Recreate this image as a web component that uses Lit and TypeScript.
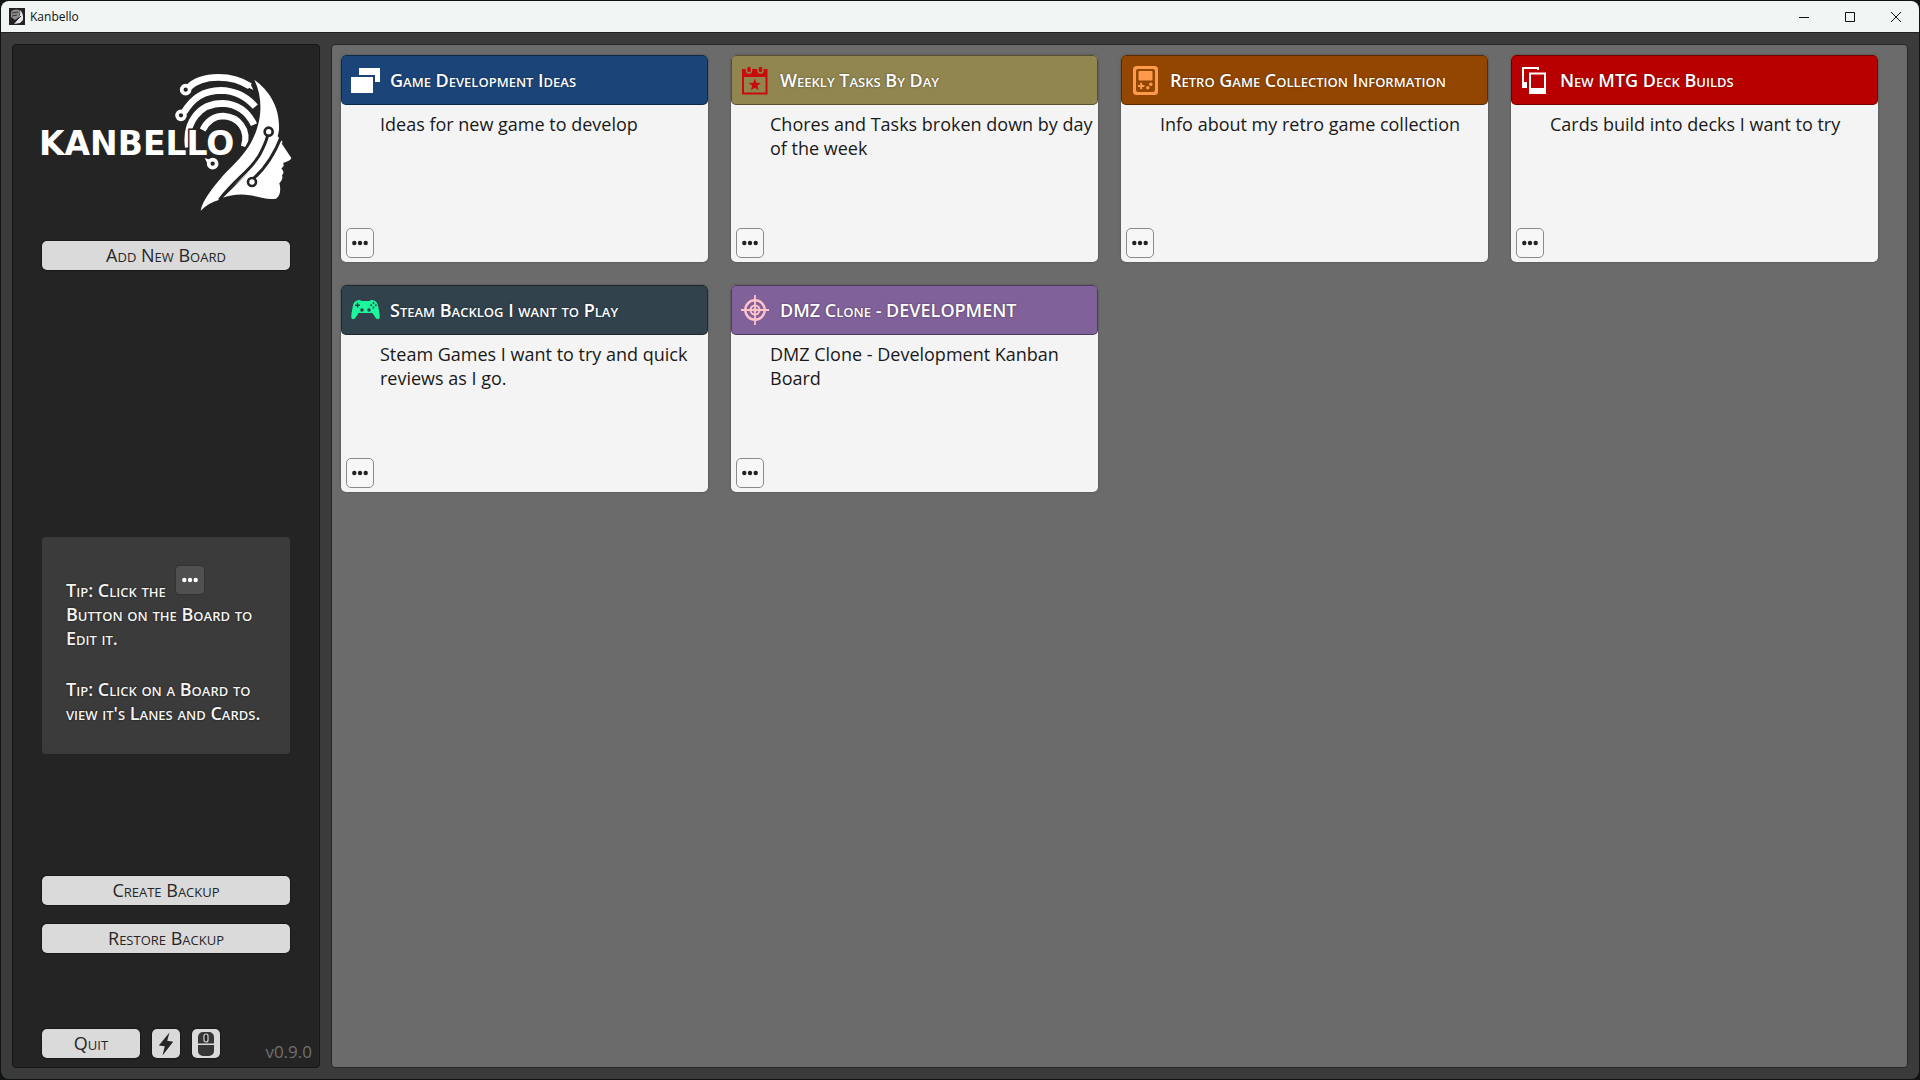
import { LitElement, html, css, svg, TemplateResult } from "lit";
import { customElement, property } from "lit/decorators.js";

interface Board {
  title: string;
  text: string;
  tone: string;
  icon: TemplateResult;
}

const windowsIcon = svg`
  <rect x="8" y="3" width="21" height="14" fill="#fff"/>
  <rect x="-1" y="10" width="25" height="19" fill="#1b4478"/>
  <rect x="0" y="12" width="22" height="16" fill="#fff"/>`;

const calendarIcon = svg`
  <path d="M1 4h25.500v25.500h-25.500z" fill="#c90b0b"/>
  <path d="M3 12h21.500v15.500h-21.500z" fill="#918550"/>
  <rect x="5.500" y="1" width="5" height="7" rx="2.500" fill="#c90b0b" stroke="#918550" stroke-width="1.500"/>
  <rect x="17" y="1" width="5" height="7" rx="2.500" fill="#c90b0b" stroke="#918550" stroke-width="1.500"/>
  <path d="M13.800 13.500l1.600 4.300 4.600.2-3.600 2.800 1.300 4.500-3.900-2.600-3.900 2.600 1.300-4.500-3.600-2.800 4.600-.2z" fill="#c90b0b"/>`;

const handheldIcon = svg`
  <rect x="2" y="1" width="25" height="29" rx="3.500" fill="#ff9a4d"/>
  <rect x="5" y="4" width="19" height="23" rx="2" fill="#924600"/>
  <rect x="7.500" y="6" width="14" height="9.500" rx="1" fill="#ff9a4d"/>
  <path d="M9.200 17.800h2v2.200h2.200v2h-2.200v2.200h-2v-2.200h-2.200v-2h2.200z" fill="#ff9a4d"/>
  <circle cx="19.800" cy="19.300" r="1.700" fill="#ff9a4d"/>
  <circle cx="16.800" cy="22.800" r="1.700" fill="#ff9a4d"/>`;

const cardsIcon = svg`
  <path d="M1 2h17v3h-2v-1h-13v13h3v6h-5z" fill="#fff"/>
  <path d="M8 7.500h17v21.500h-17z M10 9.500v13.500h13v-13.500z" fill="#fff" fill-rule="evenodd"/>`;

const gamepadIcon = svg`
  <path d="M6.500 5.500C8 4.800 9.500 5 10.500 6h8C19.500 5 21 4.800 22.500 5.500 25.500 6 26.500 8 27.300 12c.9 4.500 1.500 8 1.400 10 0 2.600-3 2.900-4.200.8L21.500 18h-14l-3 4.800C3.300 24.900.3 24.600.3 22c-.1-2 .5-5.500 1.400-10C2.500 8 3.500 6 6.500 5.500z" fill="#1cf79c"/>
  <path d="M5.800 7.800h1.400v1.700h1.700v1.400H7.200v1.700H5.800v-1.700H4.100V9.500h1.700z" fill="#31424d"/>
  <circle cx="22.500" cy="7.900" r="1" fill="#31424d"/><circle cx="24.800" cy="10.200" r="1" fill="#31424d"/>
  <circle cx="22.500" cy="12.500" r="1" fill="#31424d"/><circle cx="20.200" cy="10.200" r="1" fill="#31424d"/>
  <circle cx="11" cy="15" r="1.800" fill="#31424d"/><circle cx="18" cy="15" r="1.800" fill="#31424d"/>`;

const crosshairIcon = svg`
  <g fill="none" stroke="#ffc3cb" stroke-width="2">
    <circle cx="14" cy="15" r="9.700" stroke-width="2.400"/>
    <circle cx="14" cy="15" r="4.500"/>
    <path d="M14 0v30M0 15h28" stroke-width="1.800"/>
  </g>
  <circle cx="14" cy="15" r="2" fill="#ffc3cb"/>`;

const dots = html`<svg class="dots" viewBox="0 0 16 6" width="16" height="6" aria-hidden="true">
  <circle cx="2.300" cy="3" r="2.200"/><circle cx="8" cy="3" r="2.200"/><circle cx="13.700" cy="3" r="2.200"/>
</svg>`;

const headMark = svg`
  <g fill="none" stroke="#fff" stroke-width="20">
    <path d="M54 60C75 38 105 28 145 28C185 28 215 38 240 55"/>
    <path d="M42 133C68 90 100 68 152 67C195 68 230 86 256 116"/>
    <path d="M55 238C44 160 90 106 158 106C200 108 232 128 252 170"/>
    <path d="M98 186C112 158 134 144 160 144C205 146 238 185 222 236" stroke-width="19"/>
  </g>
  <path d="M232 20L266 74L262 100L274 140L250 192L214 258L256 250L290 130L262 20z" fill="#242424"/>
  <g fill="#fff">
    <path d="M226 38L240 44L250 66L234 58z"/>
    <path d="M104 270L140 282L116 294z"/>
  </g>
  <g fill="#fff">
    <path d="M253 35C300 70 330 118 327 186C324 222 290 262 262 290C220 330 190 350 146 396C126 402 108 412 92 428C98 398 124 364 160 322C196 284 222 262 244 222C272 170 284 100 253 35z"/>
    <path d="M158 389C205 344 250 300 290 250L332 222L364 270C360 280 346 282 340 284L341 294L334 302C342 308 342 316 336 322C340 332 334 338 328 346C334 366 330 386 318 392C290 396 268 386 240 382C208 376 180 382 158 389z"/>
    <path d="M240 300L310 190L338 222L300 290L260 330z"/>
  </g>
  <g fill="none" stroke="#242424" stroke-width="9">
    <path d="M148 396C196 332 238 312 268 262C280 240 288 222 293 203"/>
    <path d="M250 332C282 304 314 258 336 200"/>
  </g>
  <g fill="#fff" stroke="#242424" stroke-width="8">
    <circle cx="296" cy="191" r="12"/>
    <circle cx="246" cy="342" r="12"/>
  </g>
  <g fill="#242424" stroke="#fff" stroke-width="11">
    <circle cx="47" cy="65" r="12"/>
    <circle cx="33" cy="142" r="12"/>
    <circle cx="128" cy="287" r="12"/>
  </g>`;

const base = css`
  :host { box-sizing: border-box; font-family: "Open Sans", "Noto Sans", sans-serif; }
  *, *::before, *::after { box-sizing: border-box; }
  button { font: inherit; color: inherit; margin: 0; padding: 0; border: 0; background: none; cursor: pointer; }
  svg { display: block; }
  h2, p { margin: 0; }
`;

@customElement("board-card")
class BoardCard extends LitElement {
  @property({ attribute: false }) board!: Board;

  static styles = [base, css`
    :host {
      display: flex; flex-direction: column; min-height: 207px;
      background: #f4f4f4; border-radius: 5px;
      box-shadow: 0 0 2px #444;
    }
    .head {
      display: flex; align-items: center; gap: 9px; height: 50px; padding: 0 9px;
      border: 1px solid rgba(0, 0, 0, 0.4); border-radius: 5px; color: #fff;
    }
    .navy { background: #1b4478; }
    .olive { background: #918550; }
    .rust { background: #924600; }
    .red { background: #b90000; }
    .slate { background: #31424d; }
    .violet { background: #80619a; }
    .title { font-size: 18px; font-weight: 600; line-height: 24px; font-variant-caps: small-caps; white-space: nowrap; text-shadow: 0 0 2px rgba(0, 0, 0, 0.5); }
    .text { flex: 1; padding: 7px 4px 0 39px; font-size: 18px; line-height: 24px; color: #191919; }
    .menu {
      display: grid; place-items: center; width: 28px; height: 30px; margin: 0 0 4px 5px;
      border: 1px solid #8a8a8a; border-radius: 5px; background: #f7f7f7;
    }
    .dots { fill: #222; }
  `];

  render() {
    const b = this.board;
    return html`
      <header class="head ${b.tone}">
        <svg viewBox="0 0 30 30" width="30" height="30" aria-hidden="true">${b.icon}</svg>
        <h2 class="title">${b.title}</h2>
      </header>
      <p class="text">${b.text}</p>
      <button class="menu" type="button" aria-label="Edit board">${dots}</button>`;
  }
}

@customElement("app-root")
class AppRoot extends LitElement {
  private boards: Board[] = [
    { title: "Game Development Ideas", text: "Ideas for new game to develop", tone: "navy", icon: windowsIcon },
    { title: "Weekly Tasks By Day", text: "Chores and Tasks broken down by day of the week", tone: "olive", icon: calendarIcon },
    { title: "Retro Game Collection Information", text: "Info about my retro game collection", tone: "rust", icon: handheldIcon },
    { title: "New MTG Deck Builds", text: "Cards build into decks I want to try", tone: "red", icon: cardsIcon },
    { title: "Steam Backlog I want to Play", text: "Steam Games I want to try and quick reviews as I go.", tone: "slate", icon: gamepadIcon },
    { title: "DMZ Clone - DEVELOPMENT", text: "DMZ Clone - Development Kanban Board", tone: "violet", icon: crosshairIcon },
  ];

  static styles = [base, css`
    :host { display: block; min-height: 100vh; padding: 1px; background: #101414; }
    .window { display: flex; flex-direction: column; min-height: calc(100vh - 2px); border-radius: 8px; overflow: hidden; background: #3b3b3b; }
    .bar { display: flex; align-items: center; height: 32px; padding-left: 8px; background: #eff6f3; border-bottom: 1px solid #222; color: #111; }
    .name { flex: 1; padding-left: 5px; font-size: 12px; line-height: 16px; }
    .control { display: grid; place-items: center; width: 46px; height: 31px; }
    .control svg { fill: none; stroke: #111; }
    .body { flex: 1; display: flex; gap: 11px; padding: 11px; }
    .side {
      display: flex; flex-direction: column; width: 308px; padding: 28px 29px 5px;
      background: #242424; border: 1px solid #151515; border-radius: 4px;
    }
    .logo { margin-left: -1px; overflow: visible; }
    .word { font: 700 33px "DejaVu Sans", sans-serif; fill: #fff; stroke: #242424; stroke-width: 3px; paint-order: stroke; }
    .wide {
      height: 29px; background: #dadada; color: #262626; border-radius: 5px;
      font-size: 18px; line-height: 29px; font-variant-caps: small-caps; box-shadow: 0 0 2px #000;
    }
    .add { margin-top: 28px; }
    .tips {
      margin: auto 0 122px; padding: 29px 24px; background: #3b3b3b; border-radius: 4px; color: #f4f4f4;
      font-size: 18px; font-weight: 600; line-height: 24px; font-variant-caps: small-caps; text-shadow: 0 0 2px #111;
    }
    .tip + .tip { margin-top: 27px; }
    .chip {
      display: inline-grid; place-items: center; width: 28px; height: 28px; margin-left: 6px; vertical-align: 14px;
      background: #505050; border-radius: 4px; box-shadow: 0 0 2px #222;
    }
    .dots { fill: #fff; }
    .backups { display: flex; flex-direction: column; gap: 19px; }
    .foot { display: flex; align-items: flex-start; gap: 12px; margin-top: 76px; }
    .quit { width: 98px; }
    .square { display: grid; place-items: center; width: 28px; }
    .version { margin-left: auto; margin-right: -22px; padding-top: 13px; font-size: 17px; line-height: 20px; color: #707070; }
    .main {
      flex: 1; display: grid; grid-template-columns: repeat(auto-fill, 367px); align-content: start; gap: 23px; padding: 10px 9px;
      background: #6b6b6b; border: 1px solid #262626; border-radius: 4px;
    }
  `];

  render() {
    return html`
      <div class="window">
        <header class="bar">
          <svg viewBox="0 0 16 17" width="16" height="17" aria-hidden="true">
            <path d="M0 0h16v17H0z" fill="#222"/>
            <path d="M2 4C4 1 9 1 11 3L10 9L6 12L2 9z" fill="#8b8b8b"/>
            <path d="M11 2C15 6 14 10 14 12L11 15L5 16C9 12 12 8 11 2z" fill="#e6e6e6"/>
            <path d="M3 5L9 4M3 8L8 7M6 14L12 8" stroke="#333" fill="none"/>
          </svg>
          <span class="name">Kanbello</span>
          <button class="control" type="button" aria-label="Minimize"><svg width="12" height="12"><path d="M1 6.500h10"/></svg></button>
          <button class="control" type="button" aria-label="Maximize"><svg width="12" height="12"><path d="M1.500 1.500h9v9h-9z"/></svg></button>
          <button class="control" type="button" aria-label="Close"><svg width="12" height="12"><path d="M1 1l10 10M11 1L1 11"/></svg></button>
        </header>
        <div class="body">
          <aside class="side">
            <svg class="logo" viewBox="0 0 254 140" width="254" height="140" role="img" aria-label="Kanbello">
              <g transform="translate(129 -5) scale(.3333)">${headMark}</g>
              <text class="word" x="-2" y="82">KANBELLO</text>
            </svg>
            <button class="wide add" type="button">Add New Board</button>
            <section class="tips">
              <p class="tip">Tip: Click the <span class="chip">${dots}</span><br>Button on the Board to Edit it.</p>
              <p class="tip">Tip: Click on a Board to view it's Lanes and Cards.</p>
            </section>
            <div class="backups">
              <button class="wide" type="button">Create Backup</button>
              <button class="wide" type="button">Restore Backup</button>
            </div>
            <div class="foot">
              <button class="wide quit" type="button">Quit</button>
              <button class="wide square" type="button" aria-label="Quick actions">
                <svg viewBox="0 0 16 24" width="16" height="24"><path d="M11.500.5L.8 13.500l6 .8L4.500 23.500 15.200 9.800l-6-1z" fill="#262626"/></svg>
              </button>
              <button class="wide square" type="button" aria-label="Mouse settings">
                <svg viewBox="0 0 16 24" width="16" height="24">
                  <path d="M5 0h6a5 5 0 0 1 5 5v6.500H0V5a5 5 0 0 1 5-5zM0 13h16v6a5 5 0 0 1-5 5H5a5 5 0 0 1-5-5z" fill="#363636"/>
                  <rect x="6" y="2" width="4" height="8" rx="2" fill="#222" stroke="#dadada" stroke-width="1.200"/>
                </svg>
              </button>
              <span class="version">v0.9.0</span>
            </div>
          </aside>
          <main class="main">
            ${this.boards.map((b) => html`<board-card .board=${b}></board-card>`)}
          </main>
        </div>
      </div>`;
  }
}
